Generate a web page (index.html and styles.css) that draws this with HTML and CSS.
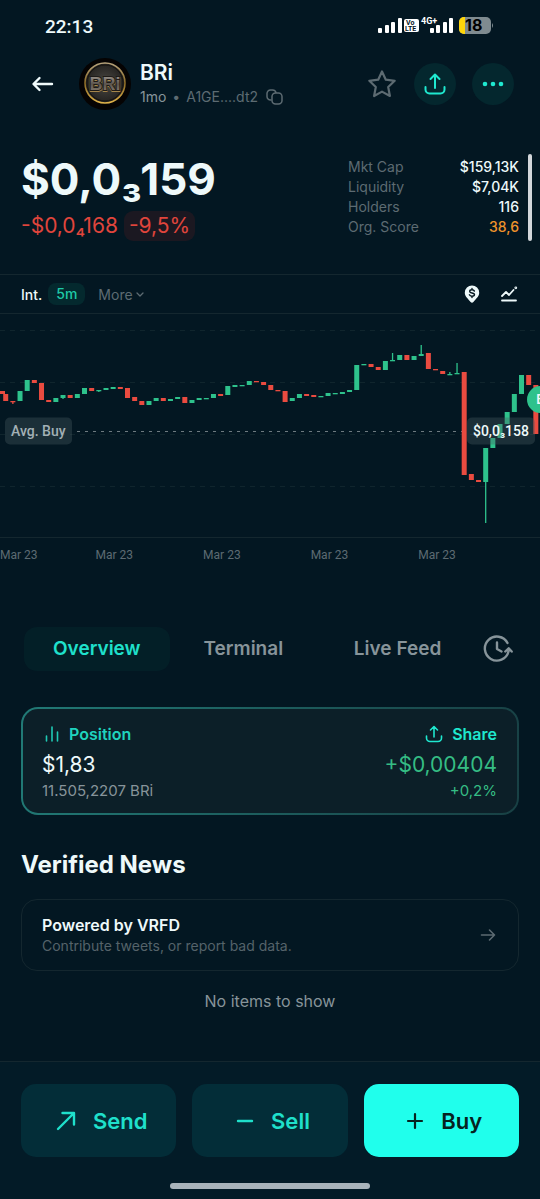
FILE: index.html
```html
<!DOCTYPE html>
<html lang="en">
<head>
    <meta charset="UTF-8">
    <meta name="viewport" content="width=device-width, initial-scale=1.0">
    <title>BRi</title>
    <link rel="stylesheet" href="styles.css">
</head>
<body>

    <div class="status-bar">
        <span class="clock">22:13</span>
        <svg class="status-icons" width="116" height="20" viewBox="0 0 116 20">
            <g fill="#fff">
                <rect x="0" y="12" width="4" height="5" rx="1"/>
                <rect x="7" y="9" width="4" height="8" rx="1"/>
                <rect x="13" y="6" width="4" height="11" rx="1"/>
                <rect x="20" y="2" width="4" height="15" rx="1"/>
                <rect x="26" y="3" width="15" height="13" rx="2"/>
                <rect x="52" y="12" width="4" height="5" rx="1"/>
                <rect x="58" y="9" width="4" height="8" rx="1"/>
                <rect x="65" y="6" width="4" height="11" rx="1"/>
                <rect x="71" y="2" width="4" height="15" rx="1"/>
            </g>
            <text class="volte" x="28" y="9">Vo</text>
            <text class="volte" x="27" y="15">LTE</text>
            <text class="net" x="43" y="8">4G+</text>
            <rect x="81" y="1" width="32" height="17" rx="5" fill="#7f8b90"/>
            <path d="M86 1h1v17h-1a5 5 0 0 1-5-5V6a5 5 0 0 1 5-5z" fill="#ffd60a"/>
            <path d="M114 7q2 2.500 0 5z" fill="#7f8b90"/>
            <text class="battery" x="87" y="15">18</text>
        </svg>
    </div>

    <header class="header">
        <button class="icon-btn back" aria-label="Back">
            <svg width="24" height="20" viewBox="0 0 24 20" fill="none" stroke="#f0fbfc" stroke-width="2.400" stroke-linecap="round" stroke-linejoin="round">
                <path d="M21 10H3M8.500 4L2.500 10l6 6"/>
            </svg>
        </button>
        <svg class="avatar" width="52" height="52" viewBox="0 0 52 52">
            <defs>
                <linearGradient id="gold" x1="0" y1="0" x2="0" y2="1">
                    <stop offset="0" stop-color="#b8a47c"/>
                    <stop offset="0.5" stop-color="#8a6a26"/>
                    <stop offset="1" stop-color="#e0b34a"/>
                </linearGradient>
                <linearGradient id="metal" x1="0" y1="0" x2="0" y2="1">
                    <stop offset="0" stop-color="#a8a29a"/>
                    <stop offset="0.5" stop-color="#5b544d"/>
                    <stop offset="1" stop-color="#8f8474"/>
                </linearGradient>
                <radialGradient id="coin">
                    <stop offset="0" stop-color="#4a4843"/>
                    <stop offset="1" stop-color="#23211f"/>
                </radialGradient>
            </defs>
            <circle cx="26" cy="26" r="26" fill="#050303"/>
            <circle cx="26" cy="25" r="20" fill="url(#coin)" stroke="url(#gold)" stroke-width="1.600"/>
            <circle cx="26" cy="25" r="18" fill="none" stroke="#15120e" stroke-width="1"/>
            <text class="avatar-text shade" x="26" y="33">BRi</text>
            <text class="avatar-text" x="26" y="32">BRi</text>
        </svg>
        <div class="token">
            <h1>BRi</h1>
            <div class="token-sub">
                <span class="age">1mo</span>
                <span>•</span>
                <span>A1GE....dt2</span>
                <button class="icon-btn copy" aria-label="Copy address">
                    <svg width="17" height="16" viewBox="0 0 17 16" fill="none" stroke="#5d6b72" stroke-width="1.500">
                        <path d="M5.500 11H4.500A3.500 3.500 0 0 1 1 7.500v-3A3.500 3.500 0 0 1 4.500 1h2A3.500 3.500 0 0 1 10 4"/>
                        <rect x="6" y="4" width="10" height="11" rx="3.500"/>
                    </svg>
                </button>
            </div>
        </div>
        <div class="actions">
            <button class="icon-btn star" aria-label="Favorite">
                <svg width="30" height="30" viewBox="0 0 30 30" fill="none" stroke="#5d6b72" stroke-width="2.200" stroke-linejoin="round">
                    <path d="M15 2.500l3.800 8.200 8.900 1.100-6.500 6.200 1.700 9L15 22.600 7.100 27l1.700-9-6.500-6.200 8.900-1.100z"/>
                </svg>
            </button>
            <button class="icon-btn round" aria-label="Share">
                <svg width="22" height="22" viewBox="0 0 22 22" fill="none" stroke="#1fe8cf" stroke-width="2" stroke-linecap="round" stroke-linejoin="round">
                    <path d="M11 15V2M6.500 6L11 1.500 15.500 6M1.500 14v2.500a4 4 0 0 0 4 4h11a4 4 0 0 0 4-4V14"/>
                </svg>
            </button>
            <button class="icon-btn round" aria-label="More options">
                <svg width="22" height="6" viewBox="0 0 22 6" fill="#1fe8cf">
                    <circle cx="3" cy="3" r="2.300"/><circle cx="11" cy="3" r="2.300"/><circle cx="19" cy="3" r="2.300"/>
                </svg>
            </button>
        </div>
    </header>

    <section class="summary">
        <div>
            <div class="price">$0,0₃159</div>
            <div class="change">
                <span>-$0,0₄168</span>
                <span class="percent">-9,5%</span>
            </div>
        </div>
        <dl class="stats">
            <dt>Mkt Cap</dt><dd>$159,13K</dd>
            <dt>Liquidity</dt><dd>$7,04K</dd>
            <dt>Holders</dt><dd>116</dd>
            <dt>Org. Score</dt><dd class="score">38,6</dd>
        </dl>
        <div class="scrollbar"></div>
    </section>

    <div class="toolbar">
        <span>Int.</span>
        <button class="interval">5m</button>
        <button class="more">More
            <svg width="8" height="5" viewBox="0 0 8 5" fill="none" stroke="#5d6b72" stroke-width="1.300" stroke-linecap="round" stroke-linejoin="round"><path d="M1 1l3 3 3-3"/></svg>
        </button>
        <button class="icon-btn pin" aria-label="Trades on chart">
            <svg width="16" height="18" viewBox="0 0 16 18">
                <path d="M8 .5a7.200 7.200 0 0 1 7.200 7.200c0 4-3.800 6.400-5.800 9.200q-1.400 1.500-2.800 0C4.600 14.100.8 11.700.8 7.700A7.200 7.200 0 0 1 8 .5z" fill="#eef9fa"/>
                <path d="M10.400 6.100C10 5.200 9.200 4.800 8 4.800c-1.400 0-2.300.6-2.300 1.600 0 2.200 4.800.9 4.800 3.100 0 1-.9 1.700-2.500 1.700-1.300 0-2.200-.5-2.600-1.400M8 3.500v1M8 11.500v1" fill="none" stroke="#04161f" stroke-width="1.400" stroke-linecap="round"/>
            </svg>
        </button>
        <button class="icon-btn" aria-label="Chart type">
            <svg width="18" height="16" viewBox="0 0 18 16" fill="none" stroke="#eef9fa" stroke-width="1.800" stroke-linecap="round" stroke-linejoin="round">
                <path d="M2 14.500h14M2 10l4-4 3 3 4.500-5"/>
                <circle cx="15.800" cy="1.800" r=".5"/>
            </svg>
        </button>
    </div>

    <section class="chart">
        <div class="plot">
            <svg id="candles" viewBox="0 0 540 228">
                <g class="grid">
                    <path d="M0 15.500h540M0 67.500h540M0 119.500h540M0 171.500h540"/>
                    <path class="axis" d="M0 222.500h540"/>
                </g>
                <path class="avg-line" d="M77 116.500h385"/>
            </svg>
            <span class="tag avg">Avg. Buy</span>
            <span class="tag avg-price">$0,0₃158</span>
            <span class="trade">B</span>
        </div>
        <div class="dates">
            <span>Mar 23</span><span>Mar 23</span><span>Mar 23</span><span>Mar 23</span><span>Mar 23</span>
        </div>
    </section>

    <nav class="tabs">
        <button class="tab active">Overview</button>
        <button class="tab">Terminal</button>
        <button class="tab feed">Live Feed</button>
        <button class="icon-btn" aria-label="History">
            <svg width="30" height="28" viewBox="0 0 30 28" fill="none" stroke="#87949a" stroke-width="2.400" stroke-linecap="round" stroke-linejoin="round">
                <path d="M24.500 8A12 12 0 1 0 25.500 16.500M22.300 16.500l3.400-3.200 3 3.200M14 7.500v6.500l4.500 2.500"/>
            </svg>
        </button>
    </nav>

    <main>
        <section class="position">
            <div class="row label">
                <span class="with-icon">
                    <svg width="18" height="18" viewBox="0 0 18 18" fill="none" stroke="#1fc9b4" stroke-width="1.600" stroke-linecap="round"><path d="M4.500 11v5M10 2v14M15.500 7v9"/></svg>
                    Position
                </span>
                <button class="with-icon share">
                    <svg width="18" height="18" viewBox="0 0 18 18" fill="none" stroke="#1fe8cf" stroke-width="1.600" stroke-linecap="round" stroke-linejoin="round"><path d="M9 12V2M5.500 5L9 1.500 12.500 5M1.500 11v2a3.500 3.500 0 0 0 3.500 3.500h8a3.500 3.500 0 0 0 3.500-3.500v-2"/></svg>
                    Share
                </button>
            </div>
            <div class="row value"><span>$1,83</span><span class="up">+$0,00404</span></div>
            <div class="row amount"><span>11.505,2207 BRi</span><span class="up">+0,2%</span></div>
        </section>

        <h2>Verified News</h2>
        <a class="news" href="#">
            <span>
                <strong>Powered by VRFD</strong>
                <small>Contribute tweets, or report bad data.</small>
            </span>
            <svg width="16" height="14" viewBox="0 0 16 14" fill="none" stroke="#5d6b72" stroke-width="1.600" stroke-linecap="round" stroke-linejoin="round"><path d="M1.500 7h13M9.500 2l5 5-5 5"/></svg>
        </a>
        <p class="empty">No items to show</p>
    </main>

    <footer class="footer">
        <div class="buttons">
            <button class="trade-btn">
                <svg width="20" height="20" viewBox="0 0 20 20" fill="none" stroke="#1fe0cb" stroke-width="2.400" stroke-linecap="round" stroke-linejoin="round"><path d="M2 18L18 2M6.500 2H18v11.500"/></svg>
                Send
            </button>
            <button class="trade-btn">
                <svg width="18" height="18" viewBox="0 0 18 18" stroke="#1fe0cb" stroke-width="2.400" stroke-linecap="round"><path d="M2 9h14"/></svg>
                Sell
            </button>
            <button class="trade-btn buy">
                <svg width="18" height="18" viewBox="0 0 18 18" stroke="#06231f" stroke-width="2.200" stroke-linecap="round"><path d="M2 9h14M9 2v14"/></svg>
                Buy
            </button>
        </div>
        <div class="home-bar"></div>
    </footer>

    <script src="chart.js"></script>
</body>
</html>
```
FILE: chart.js
```js
// [direction, body top, body bottom, wick top, wick bottom]
const candles = [
    ['r', 79, 86], ['r', 86, 87, 86, 89], ['g', 76, 86], ['g', 65, 76], ['r', 65, 68],
    ['r', 68, 85], ['r', 85, 87], ['g', 83, 87], ['g', 80, 83, 80, 84], ['r', 80, 83],
    ['g', 79, 83], ['g', 73, 79], ['r', 73, 76], ['g', 75, 76, 75, 77], ['g', 73, 75],
    ['g', 72, 74], ['r', 72, 74], ['r', 73, 83], ['r', 82, 86], ['r', 86, 90],
    ['g', 86, 90], ['g', 83, 86], ['r', 83, 86], ['g', 84, 86], ['g', 82, 84],
    ['r', 82, 88], ['g', 85, 88], ['g', 83, 85], ['g', 83, 84], ['g', 79, 83],
    ['r', 79, 81], ['g', 71, 80], ['g', 70, 72], ['g', 70, 71], ['g', 66, 70],
    ['r', 66, 67], ['r', 67, 70], ['r', 70, 75], ['r', 75, 76], ['r', 76, 87],
    ['g', 83, 86], ['g', 79, 83], ['r', 79, 81], ['r', 80, 82], ['g', 81, 82],
    ['g', 78, 81], ['g', 78, 79], ['g', 77, 79], ['g', 75, 77], ['g', 50, 75],
    ['g', 49, 50], ['r', 49, 52], ['r', 52, 55], ['g', 46, 55], ['g', 45, 46, 38, 46],
    ['g', 40, 45], ['r', 40, 45], ['g', 41, 45], ['g', 39, 41, 30, 41], ['r', 38, 54],
    ['r', 54, 55], ['r', 56, 59], ['g', 59, 60, 57, 60], ['g', 58, 59, 48, 59], ['r', 57, 160],
    ['r', 159, 165], ['r', 165, 167], ['g', 133, 167, 133, 208], ['g', 123, 133], ['g', 109, 123],
    ['g', 97, 109], ['g', 79, 97], ['g', 60, 79], ['r', 60, 70], ['r', 70, 119]
];

const step = 7.164;
const svg = document.getElementById('candles');

function addBar(x, top, bottom, width, dir) {
    const rect = document.createElementNS('http://www.w3.org/2000/svg', 'rect');
    rect.setAttribute('x', x - width / 2);
    rect.setAttribute('y', top);
    rect.setAttribute('width', width);
    rect.setAttribute('height', bottom - top);
    rect.setAttribute('class', dir === 'g' ? 'candle-up' : 'candle-down');
    svg.appendChild(rect);
}

addBar(2, 76, 79, 6, 'r');
candles.forEach(function (c, i) {
    const x = 5.7 + i * step;
    addBar(x, c[1], Math.max(c[2], c[1] + 1.3), 5, c[0]);
    if (c.length > 3) {
        addBar(x, c[3], c[4], 1.3, c[0]);
    }
});
```
FILE: styles.css
```css
* {
    box-sizing: border-box;
}
body {
    margin: 0;
    min-height: 100vh;
    display: flex;
    flex-direction: column;
    font-family: Inter, "Noto Sans", sans-serif;
    background-color: #031722;
    color: #eef9fa;
}
button {
    font: inherit;
    color: inherit;
    background: none;
    border: none;
    padding: 0;
    cursor: pointer;
}
svg {
    display: block;
    flex-shrink: 0;
}
.icon-btn {
    display: flex;
    align-items: center;
    justify-content: center;
}

/* status bar */
.status-bar {
    display: flex;
    align-items: center;
    justify-content: space-between;
    height: 52px;
    padding: 0 46px 0 45px;
}
.clock {
    font-family: Roboto, sans-serif;
    font-size: 19px;
    font-weight: 500;
}
.volte, .net, .battery {
    font-family: Roboto, sans-serif;
    font-weight: 700;
}
.volte {
    font-size: 7px;
    fill: #04161f;
}
.net {
    font-size: 9px;
    fill: #fff;
}
.battery {
    font-family: Inter, sans-serif;
    font-size: 16px;
    fill: #000;
}

/* header */
.header {
    display: flex;
    align-items: center;
    height: 64px;
    padding: 0 26px 0 31px;
}
.avatar {
    margin: 0 9px 0 24px;
}
.avatar-text {
    font-family: "Liberation Sans", sans-serif;
    font-size: 18px;
    font-weight: 700;
    text-anchor: middle;
    fill: url(#metal);
    stroke: #1d1a17;
    stroke-width: 2px;
    paint-order: stroke;
}
.avatar-text.shade {
    fill: #a5854a;
    stroke: #a5854a;
}
.token h1 {
    margin: 0;
    font-size: 21px;
    line-height: 26px;
    font-weight: 600;
}
.token-sub {
    display: flex;
    align-items: center;
    gap: 6px;
    font-size: 14px;
    line-height: 22px;
    color: #5d6b72;
}
.age {
    color: #87949a;
}
.copy {
    margin-left: 2px;
}
.actions {
    display: flex;
    align-items: center;
    gap: 16px;
    margin-left: auto;
}
.star {
    margin-right: 1px;
}
.round {
    width: 42px;
    height: 42px;
    border-radius: 50%;
    background-color: #04272e;
}

/* price and stats */
.summary {
    position: relative;
    display: flex;
    justify-content: space-between;
    height: 158px;
    padding: 39px 21px 0;
}
.price {
    font-size: 44px;
    line-height: 48px;
    font-weight: 700;
}
.change {
    display: flex;
    align-items: center;
    gap: 6px;
    margin-top: 8px;
    font-size: 21px;
    line-height: 30px;
    color: #e0453c;
}
.percent {
    padding: 0 5px;
    border-radius: 9px;
    background-color: #1b1821;
}
.stats {
    display: grid;
    grid-template-columns: 1fr auto;
    width: 171px;
    margin: 2px 0 0;
    font-size: 14px;
    line-height: 20px;
    align-content: start;
}
.stats dt {
    color: #5d6b72;
}
.stats dd {
    margin: 0;
    text-align: right;
    font-weight: 500;
}
.stats .score {
    color: #f0932b;
}
.scrollbar {
    position: absolute;
    top: 38px;
    right: 8px;
    width: 4px;
    height: 87px;
    border-radius: 2px;
    background-color: #d3d6da;
}

/* chart */
.toolbar {
    display: flex;
    align-items: center;
    height: 40px;
    padding: 0 22px 0 21px;
    border-top: 1px solid #14272f;
    border-bottom: 1px solid #14272f;
    font-size: 14px;
    font-weight: 500;
}
.interval {
    margin: 0 13px 0 6px;
    padding: 0 8px;
    line-height: 22px;
    border-radius: 8px;
    background-color: #04292e;
    color: #1fc9a8;
}
.more {
    display: flex;
    align-items: center;
    gap: 3px;
    font-weight: 400;
    color: #5d6b72;
}
.pin {
    margin: 0 20px 0 auto;
}
.chart {
    padding-top: 1px;
    overflow: hidden;
}
.plot {
    position: relative;
}
.plot svg {
    width: 100%;
    height: auto;
}
.grid {
    fill: none;
    stroke: #10252d;
    stroke-dasharray: 5 5;
}
.axis {
    stroke: #14272f;
    stroke-dasharray: none;
}
.avg-line {
    fill: none;
    stroke: #6d7a80;
    stroke-dasharray: 3 5;
}
.candle-up {
    fill: #2ec28c;
}
.candle-down {
    fill: #ea4b40;
}
.tag {
    position: absolute;
    top: 51%;
    transform: translateY(-50%);
    padding: 0 6px;
    border-radius: 5px;
    background-color: rgba(74, 92, 98, 0.35);
    font-family: Roboto, sans-serif;
    font-size: 14px;
    line-height: 27px;
    font-weight: 500;
}
.avg {
    left: 5px;
    color: #a3b1b6;
}
.avg-price {
    right: 5px;
}
.trade {
    position: absolute;
    top: 31%;
    right: -14px;
    width: 27px;
    height: 27px;
    border-radius: 50%;
    background-color: #2ec28c;
    font-size: 13px;
    line-height: 27px;
    font-weight: 600;
    text-align: center;
}
.dates {
    display: flex;
    gap: 70px;
    margin-top: 2px;
    font-family: Roboto, sans-serif;
    font-size: 12px;
    line-height: 20px;
    color: #5d6b72;
}
.dates span:first-child {
    margin-right: -12px;
}

/* tabs */
.tabs {
    display: flex;
    align-items: center;
    gap: 5px;
    margin-top: 62px;
    padding: 0 27px 0 24px;
    font-size: 19px;
    line-height: 44px;
    font-weight: 600;
    color: #87949a;
}
.tab {
    padding: 0 29px;
}
.tab.feed {
    flex: 1;
    padding: 0;
}
.tab.active {
    border-radius: 13px;
    background-color: #031f27;
    color: #1fe0cb;
}

/* content */
main {
    padding: 36px 21px 0;
}
.position {
    padding: 14px 20px 13px 19px;
    border: 2px solid transparent;
    border-radius: 17px;
    background: linear-gradient(#0c1f28, #0c1f28) padding-box, linear-gradient(100deg, #217a76, #184044) border-box;
}
.row {
    display: flex;
    align-items: center;
    justify-content: space-between;
}
.label {
    font-size: 16px;
    line-height: 22px;
    font-weight: 600;
    color: #1fd3be;
}
.with-icon {
    display: flex;
    align-items: center;
    gap: 9px;
}
.share {
    color: #1fe8cf;
}
.value {
    margin-top: 4px;
    font-size: 21px;
    line-height: 32px;
}
.amount {
    font-size: 15px;
    line-height: 19px;
    color: #87949a;
}
.up {
    color: #35bd84;
}
h2 {
    margin: 34px 0 18px;
    font-size: 24px;
    line-height: 32px;
    font-weight: 700;
}
.news {
    display: flex;
    align-items: center;
    justify-content: space-between;
    padding: 14px 22px 14px 20px;
    border: 1px solid #14272f;
    border-radius: 16px;
    color: inherit;
    text-decoration: none;
}
.news strong, .news small {
    display: block;
}
.news strong {
    font-size: 16px;
    line-height: 22px;
    font-weight: 600;
}
.news small {
    font-size: 14px;
    line-height: 20px;
    color: #55636a;
}
.empty {
    margin: 19px 0;
    font-size: 16px;
    line-height: 22px;
    text-align: center;
    color: #87949a;
}

/* footer */
.footer {
    margin-top: auto;
    padding: 22px 21px 10px;
    border-top: 1px solid #14272f;
    background-color: #031b27;
}
.buttons {
    display: grid;
    grid-template-columns: repeat(3, 1fr);
    gap: 16px;
}
.trade-btn {
    display: flex;
    align-items: center;
    justify-content: center;
    gap: 17px;
    height: 73px;
    padding-left: 6px;
    border-radius: 15px;
    background-color: #032d38;
    font-size: 22px;
    font-weight: 600;
    color: #1fe0cb;
}
.buy {
    background-color: #20ffec;
    color: #06231f;
}
.home-bar {
    width: 200px;
    height: 6px;
    margin: 26px auto 0;
    border-radius: 3px;
    background-color: #a8b3ba;
}
```
